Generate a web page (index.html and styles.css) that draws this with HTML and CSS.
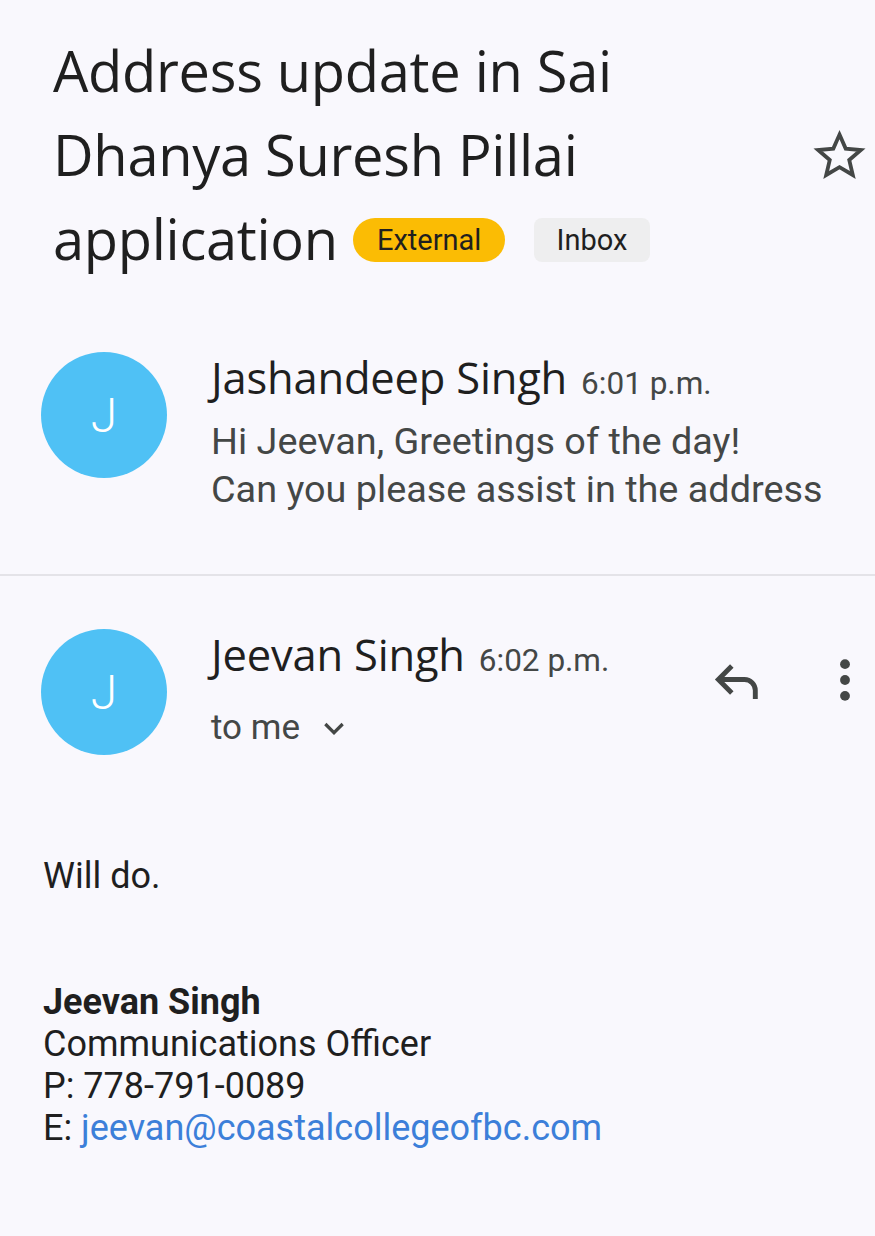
FILE: index.html
```html
<!DOCTYPE html>
<html>
<head>
<meta charset="utf-8">
<link rel="stylesheet" href="styles.css">
</head>
<body>
<div class="page">
  <header class="subject">
    <h1 class="title">Address update in Sai Dhanya Suresh Pillai <span class="title-end">application</span> <span class="badge badge-ext">External</span> <span class="badge badge-inbox">Inbox</span></h1>
    <svg class="star" viewBox="0 0 24 24" width="57" height="57"><path d="M12 3.2l2.6 5.9 6.4.6-4.9 4.2 1.5 6.3L12 16.9l-5.6 3.3 1.5-6.3L3 9.7l6.4-.6z" fill="none" stroke="#444746" stroke-width="1.6" stroke-linejoin="miter"/></svg>
  </header>

  <section class="msg collapsed">
    <div class="avatar">J</div>
    <div class="msg-main">
      <div class="from"><span class="name">Jashandeep Singh</span><span class="time">6:01 p.m.</span></div>
      <div class="preview">Hi Jeevan, Greetings of the day!<br>Can you please assist in the address</div>
    </div>
  </section>

  <div class="divider"></div>

  <section class="msg open">
    <div class="avatar">J</div>
    <div class="msg-main">
      <div class="from"><span class="name">Jeevan Singh</span><span class="time">6:02 p.m.</span></div>
      <div class="to">to me <svg class="chev" viewBox="0 0 24 24" width="32" height="32"><path d="M5.5 9l6.5 6.5 6.5-6.5" fill="none" stroke="#444746" stroke-width="2.4"/></svg></div>
    </div>
    <div class="actions">
      <svg class="reply" viewBox="0 0 24 24" width="62" height="62"><path d="M9.6 6.6L4.4 11.8l5.2 5.2M4.8 11.8H14.5a4.2 4.2 0 0 1 4.2 4.2v3.4" fill="none" stroke="#444746" stroke-width="1.9"/></svg>
      <svg class="more" viewBox="0 0 24 24" width="56" height="56"><circle cx="12" cy="5.2" r="2.1" fill="#444746"/><circle cx="12" cy="12" r="2.1" fill="#444746"/><circle cx="12" cy="18.8" r="2.1" fill="#444746"/></svg>
    </div>
  </section>

  <article class="body">
    <p class="text">Will do.</p>
    <div class="sig">
      <div class="sig-name">Jeevan Singh</div>
      <div>Communications Officer</div>
      <div>P: 778-791-0089</div>
      <div>E: <a class="mail" href="#">jeevan@coastalcollegeofbc.com</a></div>
    </div>
  </article>
</div>
</body>
</html>
```

FILE: styles.css
```css
* { box-sizing: border-box; }
html, body { margin: 0; padding: 0; }
body {
  background: #f9f8fd;
  font-family: Roboto, "Noto Sans", sans-serif;
  color: #1f1f1f;
  width: 875px;
  height: 1236px;
  overflow: hidden;
}
.subject {
  display: flex;
  align-items: center;
  padding: 28px 7px 0 53px;
}
.title {
  flex: 1;
  margin: 0;
  font-family: "Open Sans", Roboto, sans-serif;
  font-weight: 400;
  font-size: 56px;
  line-height: 84px;
  letter-spacing: -0.3px;
  color: #1f1f1f;
  padding-right: 60px;
}
.badge {
  display: inline-block;
  vertical-align: 10px;
  font-family: Roboto, sans-serif;
  font-size: 29px;
  line-height: 44px;
  height: 44px;
  letter-spacing: 0;
  color: #1f1f1f;
}
.badge-ext {
  background: #fbbc04;
  border-radius: 22px;
  padding: 0 24px;
  margin-left: 1px;
}
.badge-inbox {
  background: #eeeeef;
  border-radius: 8px;
  padding: 0 23px;
  margin-left: 14px;
}
.star { flex: none; margin-top: 2px; }

.msg {
  display: flex;
  align-items: flex-start;
  padding: 0 0 0 41px;
}
.collapsed { margin-top: 72px; }
.avatar {
  flex: none;
  width: 126px;
  height: 126px;
  border-radius: 50%;
  background: #4fc1f5;
  color: #fff;
  font-size: 48px;
  display: flex;
  align-items: center;
  justify-content: center;
  font-weight: 300;
}
.msg-main {
  flex: 1;
  padding-left: 44px;
  padding-top: 1px;
}
.from { line-height: 50px; display: flex; align-items: baseline; gap: 14px; }
.name { font-size: 43.5px; color: #1f1f1f; font-family: "Open Sans", Roboto, sans-serif; letter-spacing: -0.2px; }
.time { font-size: 31.5px; color: #444746; }
.preview {
  font-size: 37.8px;
  line-height: 48px;
  color: #444746;
  margin-top: 8px;
}
.divider {
  height: 2px;
  background: #e4e3e8;
  margin-top: 61px;
}
.open { margin-top: 53px; }
.to {
  font-size: 35px;
  color: #444746;
  line-height: 48px;
  margin-top: 18px;
  display: flex;
  align-items: center;
  gap: 18px;
}
.actions {
  display: flex;
  align-items: center;
  gap: 48px;
  padding-top: 20px;
  padding-right: 2px;
}
.body { padding: 100px 0 0 43px; }
.text { margin: 0; font-size: 36px; line-height: 42px; color: #1f1f1f; }
.sig {
  margin-top: 84px;
  font-size: 36px;
  line-height: 42px;
  color: #1f1f1f;
}
.sig-name { font-weight: 700; }
.mail { color: #3c7fd9; text-decoration: none; }
```
